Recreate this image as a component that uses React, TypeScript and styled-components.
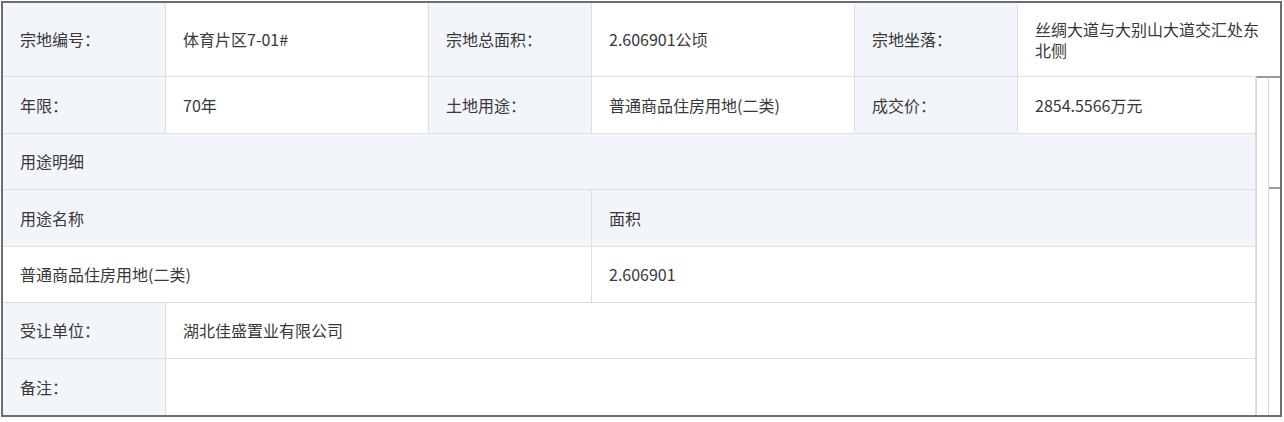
import React, { FC } from 'react'
import styled, { createGlobalStyle } from 'styled-components'

const GlobalStyle = createGlobalStyle`
    body {
        margin: 0;
        background: #fff;
        font-family: "Noto Sans CJK SC", "Noto Sans", sans-serif;
        color: #383838;
    }
`

const Frame = styled.div`
    margin: 1px 0 0 1px;
    width: 1277px;
    height: 412px;
    border: 2px solid #6e6e6e;
    display: flex;
    flex-direction: column;
    background: #fff;
`

const TopRow = styled.div`
    display: grid;
    grid-template-columns: 163px 263px 163px 263px 163px 1fr;
    height: 74px;
    border-bottom: 1px solid #dcdfe3;
    box-sizing: border-box;
`

const Body = styled.div`
    flex: 1;
    display: flex;
`

const Table = styled.div`
    width: 1253px;
    display: flex;
    flex-direction: column;
`

const Row = styled.div<{ $cols: string; $h?: number }>`
    display: grid;
    grid-template-columns: ${p => p.$cols};
    height: ${p => p.$h ?? 56}px;
    border-bottom: 1px solid #dcdfe3;
    box-sizing: border-box;
    &:last-child {
        border-bottom: none;
    }
`

const Cell = styled.div<{ $label?: boolean; $last?: boolean }>`
    display: flex;
    align-items: center;
    padding: 0 12px 0 17px;
    font-size: 16px;
    line-height: 21px;
    background: ${p => (p.$label ? '#f2f5fa' : '#fff')};
    border-right: ${p => (p.$last ? 'none' : '1px solid #dcdfe3')};
    box-sizing: border-box;
    min-width: 0;
`

const Strip = styled.div`
    flex: 1;
    display: flex;
    border-left: 1px solid #d8d8d8;
    border-top: 2px solid #9a9a9a;
    margin-top: -1px;
`

const StripCol = styled.div<{ $line?: boolean }>`
    flex: 1;
    border-left: ${p => (p.$line ? '1px solid #d8d8d8' : 'none')};
    display: flex;
    flex-direction: column;
`

const Tick = styled.div`
    height: 111px;
    border-bottom: 2px solid #9a9a9a;
    box-sizing: border-box;
`

const split = '589px 1fr'
const labelSplit = '163px 1fr'

const App: FC = () => {
    return (
        <>
            <GlobalStyle />
            <Frame>
                <TopRow>
                    <Cell $label>宗地编号：</Cell>
                    <Cell>体育片区7-01#</Cell>
                    <Cell $label>宗地总面积：</Cell>
                    <Cell>2.606901公顷</Cell>
                    <Cell $label>宗地坐落：</Cell>
                    <Cell $last>丝绸大道与大别山大道交汇处东北侧</Cell>
                </TopRow>
                <Body>
                    <Table>
                        <Row $cols="163px 263px 163px 263px 163px 1fr" $h={57}>
                            <Cell $label>年限：</Cell>
                            <Cell>70年</Cell>
                            <Cell $label>土地用途：</Cell>
                            <Cell>普通商品住房用地(二类)</Cell>
                            <Cell $label>成交价：</Cell>
                            <Cell>2854.5566万元</Cell>
                        </Row>
                        <Row $cols="1fr">
                            <Cell $label>用途明细</Cell>
                        </Row>
                        <Row $cols={split} $h={57}>
                            <Cell $label>用途名称</Cell>
                            <Cell $label>面积</Cell>
                        </Row>
                        <Row $cols={split}>
                            <Cell>普通商品住房用地(二类)</Cell>
                            <Cell>2.606901</Cell>
                        </Row>
                        <Row $cols={labelSplit}>
                            <Cell $label>受让单位：</Cell>
                            <Cell>湖北佳盛置业有限公司</Cell>
                        </Row>
                        <Row $cols={labelSplit}>
                            <Cell $label>备注：</Cell>
                            <Cell></Cell>
                        </Row>
                    </Table>
                    <Strip>
                        <StripCol />
                        <StripCol $line>
                            <Tick />
                        </StripCol>
                    </Strip>
                </Body>
            </Frame>
        </>
    )
}

export default App
